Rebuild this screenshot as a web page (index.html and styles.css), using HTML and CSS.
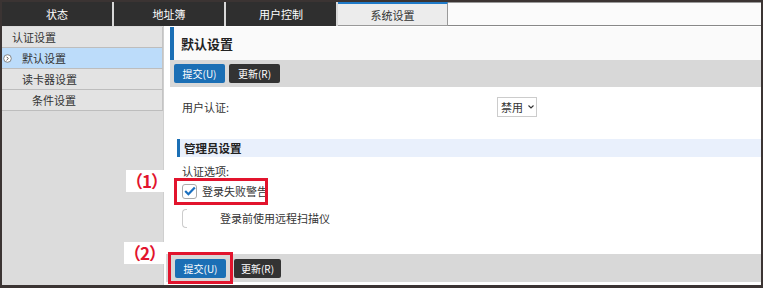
FILE: index.html
```html
<!DOCTYPE html>
<html lang="zh-CN">
<head>
  <meta charset="UTF-8">
  <title>系统设置 - 默认设置</title>
  <link rel="stylesheet" href="styles.css">
</head>
<body>
  <div class="frame">
    <div class="tabs">
      <div class="tab">状态</div>
      <div class="tab">地址簿</div>
      <div class="tab">用户控制</div>
      <div class="tab active">系统设置</div>
      <div class="tab-rest"></div>
    </div>

    <div class="wrap">
      <ul class="side">
        <li>认证设置</li>
        <li class="sub selected">
          <span class="arrow">
            <svg width="9" height="9" viewBox="0 0 9 9"><circle cx="4.5" cy="4.5" r="3.8" fill="#fff" stroke="#7a7a7a" stroke-width="0.9"/><path d="M3.6 2.8 L5.3 4.5 L3.6 6.2" fill="none" stroke="#555" stroke-width="1"/></svg>
          </span>默认设置
        </li>
        <li class="sub">读卡器设置</li>
        <li class="sub2">条件设置</li>
      </ul>

      <div class="main">
        <div class="title"><h2>默认设置</h2></div>
        <div class="bar">
          <button class="btn blue">提交(U)</button>
          <button class="btn dark">更新(R)</button>
        </div>

        <div class="content">
          <div class="row">
            <span class="label">用户认证:</span>
            <span class="select"><span>禁用</span><svg width="6" height="4" viewBox="0 0 6 4"><path d="M0.5 0.5 L3 3 L5.5 0.5" fill="none" stroke="#333" stroke-width="1.1"/></svg></span>
          </div>

          <div class="section"><h3>管理员设置</h3></div>

          <div class="opt-label">认证选项:</div>
          <div class="check-row">
            <span class="box">
              <svg width="12" height="10" viewBox="0 0 12 10"><path d="M1.2 5 L4.4 8.2 L10.8 1.4" fill="none" stroke="#1a6fbf" stroke-width="2.2"/></svg>
            </span>
            <span>登录失败警告</span>
          </div>
          <div class="check-row second">
            <span class="half-box"></span>
            <span>登录前使用远程扫描仪</span>
          </div>
        </div>

        <div class="bar bottom">
          <button class="btn blue">提交(U)</button>
          <button class="btn dark narrow">更新(R)</button>
        </div>
      </div>
    </div>

    <div class="note n1">（1）</div>
    <div class="mark m1"></div>
    <div class="note n2">（2）</div>
    <div class="mark m2"></div>
  </div>
</body>
</html>
```

FILE: styles.css
```css
* { box-sizing: border-box; }
body { margin: 0; font-family: "Noto Sans CJK SC", "Noto Sans", sans-serif; font-size: 11px; color: #333; background: #fff; }

.frame { position: relative; width: 763px; height: 288px; border: 2px solid #3b3433; border-bottom-width: 3px; display: flex; flex-direction: column; }

.tabs { display: flex; height: 24px; flex-shrink: 0; }
.tab { width: 112px; background: #2f2f2f; color: #fff; font-size: 11px; display: flex; align-items: center; justify-content: center; border-right: 2px solid #d8d8d8; }
.tab.active { width: 110px; background: #ececec; color: #333; border-top: 2px solid #1f7ac8; border-right: 1px solid #999; border-bottom: 1px solid #999; }
.tab-rest { flex: 1; background: #fbfbfb; border-top: 1px solid #999; border-bottom: 1px solid #888; }

.wrap { flex: 1; display: flex; }

.side { width: 162px; margin: 0; padding: 1px 0 0; list-style: none; background: #dcdcdc; border-right: 1px solid #cfcfcf; }
.side li { height: 21px; display: flex; align-items: center; padding-left: 10px; background: #e3e3e3; border-bottom: 1px solid #bdbdbd; border-right: 1px solid #c4c4c4; }
.side li.sub { padding-left: 20px; }
.side li.sub2 { padding-left: 30px; }
.side li.selected { background: #bcdcfa; padding-left: 0; }
.arrow { width: 20px; display: flex; align-items: center; padding-left: 1px; }

.main { flex: 1; display: flex; flex-direction: column; padding: 1px 0 3px 6px; background: #fff; }

.title { height: 33px; background: #fafafa; border-left: 4px solid #1b6fb5; display: flex; align-items: center; padding-left: 7px; }
.title h2 { margin: 0; font-size: 13px; font-weight: bold; color: #222; }

.bar { height: 27px; background: #d8d8d8; display: flex; align-items: center; gap: 4px; padding-left: 4px; }
.bar.bottom { margin-top: auto; height: 28px; margin-left: -4px; padding-left: 9px; gap: 8px; }
.btn { height: 19px; width: 51px; border: 0; border-radius: 2px; color: #fff; font-family: inherit; font-size: 10px; padding: 0; }
.btn.blue { background: #1b6fb5; }
.btn.dark { background: #333; }
.btn.narrow { width: 47px; }

.content { padding: 10px 0 0 12px; }
.row { display: flex; align-items: center; height: 20px; }
.label { width: 315px; }
.select { width: 40px; height: 20px; border: 1px solid #ccc; display: flex; align-items: center; gap: 5px; padding: 0 0 0 3px; }

.section { margin: 22px 0 0 -5px; height: 18px; background: #e9f0fc; border-left: 3px solid #1b6fb5; display: flex; align-items: center; padding-left: 4px; }
.section h3 { margin: 0; font-size: 11.5px; font-weight: bold; color: #222; }

.opt-label { margin-top: 7px; height: 14px; line-height: 14px; }
.check-row { display: flex; align-items: center; gap: 5px; height: 20px; margin-top: 3px; }
.box { width: 15px; height: 15px; border: 1px solid #aaa; border-radius: 3px; background: #fff; display: flex; align-items: center; justify-content: center; }
.check-row.second { margin-top: 7px; height: 20px; gap: 33px; }
.half-box { width: 5px; height: 19px; border: 1px solid #ccc; border-right: 0; border-radius: 4px 0 0 4px; }

.note { position: absolute; background: #fff; color: #e2142d; font-weight: bold; font-size: 17px; line-height: 22px; padding: 0 1px 0 0; letter-spacing: -1px; }
.n1 { left: 124px; top: 168px; }
.n2 { left: 122px; top: 240px; }
.mark { position: absolute; border: 3px solid #e2142d; }
.m1 { left: 172px; top: 176px; width: 94px; height: 27px; }
.m2 { left: 166px; top: 250px; width: 65px; height: 32px; }
```
